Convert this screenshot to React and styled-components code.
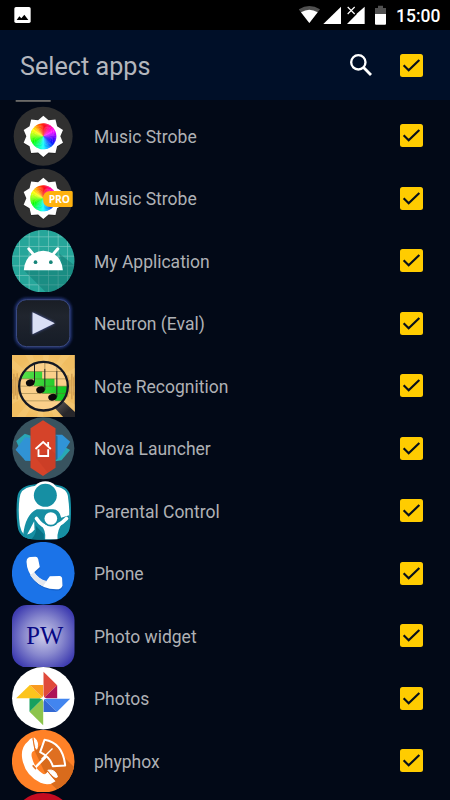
import React, { useState } from 'react'
import styled, { createGlobalStyle } from 'styled-components'

const polar = (cx, cy, r, deg) => {
    const a = (deg - 90) * Math.PI / 180
    return `${(cx + r * Math.cos(a)).toFixed(2)} ${(cy + r * Math.sin(a)).toFixed(2)}`
}

function HeadIcon() {
    return (
        <AppIcon viewBox="0 0 187.5 187.5">
            <rect x="11" y="150" width="105" height="29.5" fill="#6b6a68" />
        </AppIcon>
    )
}

function StrobeIcon({ pro }) {
    const star = Array.from({ length: 20 }, (_, i) => polar(94, 94, i % 2 ? 51 : 62, i * 18)).join(' L')
    return (
        <AppIcon viewBox="0 0 187.5 187.5">
            <circle cx="93.5" cy="93.5" r="88.5" fill="#303030" />
            <path d={`M${star}Z`} fill="#111" opacity="0.35" transform="translate(0 3)" />
            <path d={`M${star}Z`} fill="#fff" />
            {/* hue wheel, runs backwards from red at the top */}
            {Array.from({ length: 72 }, (_, i) => (
                <path
                    key={i}
                    d={`M94 94 L${polar(94, 94, 39, i * 5 - 1)} A39 39 0 0 1 ${polar(94, 94, 39, i * 5 + 5)}Z`}
                    fill={`hsl(${(360 - i * 5) % 360} 100% 50%)`}
                />
            ))}
            {pro && (
                <>
                    <path d="M116 72 H178 Q182 72 182 76 V116 Q182 120 178 120 H116 Q93 120 93 96 Q93 72 116 72Z" fill="#ffb20e" />
                    <text x="110" y="108" fontSize="31" fontWeight="700" fontFamily="'Open Sans', sans-serif" fill="#fff" textLength="64">PRO</text>
                </>
            )}
        </AppIcon>
    )
}

function AndroidIcon() {
    return (
        <AppIcon viewBox="37.5 13.5 187.5 187.5">
            <clipPath id="android"><circle cx="131.2" cy="107.2" r="94" /></clipPath>
            <g clipPath="url(#android)">
                <rect x="37" y="13" width="189" height="189" fill="#26a69a" />
                <path d="M60 13V202M89 13V202M118 13V202M147 13V202M176 13V202M204 13V202M37 34H226M37 63H226M37 92H226M37 121H226M37 150H226M37 178H226" stroke="#7cc9c0" strokeWidth="2" />
                <path d="M73 134 L145 206 H226 V120 L180 85 L190 134Z" fill="#0d6f68" opacity="0.45" />
            </g>
            <path d="M73 134 Q75 98 102 84 Q131 68 161 84 Q187 98 190 134Z" fill="#fff" />
            <path d="M101 86 L88 70M161 86 L175 70" stroke="#fff" strokeWidth="9" strokeLinecap="round" />
            <circle cx="108" cy="110" r="5.5" fill="#168579" />
            <circle cx="154" cy="110" r="5.5" fill="#168579" />
        </AppIcon>
    )
}

function NeutronIcon() {
    return (
        <AppIcon viewBox="37.5 201 187.5 187.5">
            <defs>
                <linearGradient id="neutron" x2="0" y2="1">
                    <stop offset="0" stopColor="#191d25" />
                    <stop offset="0.35" stopColor="#20252e" />
                    <stop offset="1" stopColor="#161c27" />
                </linearGradient>
                <filter id="glow" x="-20%" y="-20%" width="140%" height="140%"><feGaussianBlur stdDeviation="4" /></filter>
            </defs>
            <rect x="50" y="223" width="162" height="143" rx="32" fill="none" stroke="#3048a6" strokeWidth="6" filter="url(#glow)" />
            <rect x="51" y="224" width="160" height="141" rx="30" fill="url(#neutron)" stroke="#3c4b82" strokeWidth="3" />
            <path d="M99 262 L166 295 L99 328Z" fill="#5260a8" filter="url(#glow)" />
            <path d="M99 262 L166 295 L99 328Z" fill="#dadff5" />
        </AppIcon>
    )
}

function NoteIcon() {
    return (
        <AppIcon viewBox="37.5 13.5 187.5 187.5">
            <defs>
                <radialGradient id="sand">
                    <stop offset="0" stopColor="#ffda8c" />
                    <stop offset="1" stopColor="#f0bd61" />
                </radialGradient>
                <linearGradient id="green" x2="1" y2="0">
                    <stop offset="0" stopColor="#5de04b" />
                    <stop offset="1" stopColor="#0cc41f" />
                </linearGradient>
                <linearGradient id="handle" x2="1" y2="1">
                    <stop offset="0" stopColor="#6a6460" />
                    <stop offset="0.6" stopColor="#27262a" />
                </linearGradient>
                <clipPath id="lens"><circle cx="132" cy="107" r="72" /></clipPath>
            </defs>
            <rect x="37" y="13" width="189" height="189" fill="url(#sand)" />
            {Array.from({ length: 12 }, (_, i) => (
                <path key={i} d={`M131 107 L${polar(131, 107, 150, i * 30)} L${polar(131, 107, 150, i * 30 + 11)}Z`} fill="#ffe0a0" opacity="0.2" />
            ))}
            <path d="M38 86V129M43 70V146M48 79V135M53 68V147M58 82V131M205 74V140M211 88V130M217 70V146M223 80V135" stroke="#c9964c" strokeWidth="4" opacity="0.8" />
            <path d="M164 170 L187 148 L232 190 V206 H197Z" fill="url(#handle)" />
            <g clipPath="url(#lens)">
                <rect x="58" y="34" width="148" height="148" fill="#fbd08a" />
                <path d="M60 63H128V85H165V107H206V151H167V129H128V107H103V85H60Z" fill="url(#green)" />
                <path d="M56 63H206M56 85H206M56 107H206M56 129H206M56 151H206" stroke="#70602d" strokeWidth="2" opacity="0.65" />
                <path d="M105 34V96M136 55V118M172 62V139" stroke="#211f22" strokeWidth="3" />
                <path d="M136 34V55M172 34V62" stroke="#8d7546" strokeWidth="2" />
            </g>
            <g fill="#0b090b">
                <ellipse cx="92" cy="97" rx="13" ry="10" transform="rotate(-15 92 97)" />
                <ellipse cx="123" cy="118" rx="13" ry="10" transform="rotate(-15 123 118)" />
                <ellipse cx="159" cy="140" rx="13" ry="10" transform="rotate(-15 159 140)" />
            </g>
            <circle cx="132" cy="107" r="73" fill="none" stroke="#141823" strokeWidth="7" />
        </AppIcon>
    )
}

function NovaIcon() {
    return (
        <AppIcon viewBox="37.5 201 187.5 187.5">
            <circle cx="131.5" cy="295" r="93" fill="#38535f" />
            <path d="M50 273 L76 251 L94 257 V332 L76 331Z" fill="#2aa6b5" />
            <path d="M48 299 L77 262 L94 264 V332 H78Z" fill="#3093d5" />
            <path d="M167 275 L212 300 L186 331 L167 334Z" fill="#28a9b4" />
            <path d="M167 254 H188 L212 275 L186 316 L167 332Z" fill="#3094d7" />
            <path d="M167 254 L174 259 V326 L167 332Z" fill="#20516a" opacity="0.6" />
            <path d="M130.5 211 L168 235 V353 L130.5 378 L93 353 V235Z" fill="#d54329" />
            <path d="M155 299 L168 312 V353 L145 368 L108 322Z" fill="#a82e20" opacity="0.2" />
            <path d="M108 297 L131 276 L154 297M146 288V276M117 298V318H146V298" fill="none" stroke="#fff" strokeWidth="5.5" />
        </AppIcon>
    )
}

function ParentalIcon() {
    return (
        <AppIcon viewBox="37.5 13.5 187.5 187.5">
            <clipPath id="parental"><path d="M98 28 Q131 20 170 28 Q211 34 213 68 Q217 113 212 151 Q207 188 167 191 Q132 195 96 191 Q58 188 54 151 Q48 108 53 68 Q56 33 98 28Z" /></clipPath>
            <g clipPath="url(#parental)">
                <rect x="37" y="13" width="189" height="189" fill="#168fa3" />
                <path d="M96 33 Q131 24 166 32 Q206 38 206 69 Q212 108 207 149 Q200 181 165 184 L96 187 Q68 185 61 150 Q55 108 60 69 Q62 39 96 33Z" fill="#fff" />
                <path d="M71 178 Q78 116 112 101 H159 Q180 100 185 127 L209 119 V192 H71Z" fill="#168fa3" />
                <path d="M104 137 L105 162 Q97 174 83 177Z" fill="#fff" />
                <path d="M96 191 Q113 175 109 151 L133 176 V192Z" fill="#087184" />
            </g>
            <circle cx="137.5" cy="59.5" r="42" fill="#fff" />
            <circle cx="137.5" cy="59.5" r="34.5" fill="#168fa3" />
            <path d="M111 129 Q128 155 149 155 Q179 153 201 129" fill="none" stroke="#fff" strokeWidth="11" strokeLinecap="round" />
            <path d="M121 143 Q138 151 155 153 Q173 151 190 141 Q172 163 174 191 H137 Q140 163 121 143Z" fill="#fff" />
            <circle cx="154" cy="129" r="24" fill="#168fa3" />
            <circle cx="154" cy="129" r="19" fill="#fff" />
        </AppIcon>
    )
}

function PhoneIcon() {
    return (
        <AppIcon viewBox="37.5 201 187.5 187.5">
            <circle cx="131.2" cy="294.7" r="94" fill="#1b73e8" />
            <g transform="translate(1 4)" opacity="0.25">
                <path d="M81 260 Q82 246 94 246 L108 245 Q114 245 116 252 L121 276 L104 292 Q117 312 139 320 L151 304 L180 303 Q188 304 188 312 L189 332 Q186 343 170 343 Q130 343 104 315 Q82 290 81 260Z" fill="#06397f" />
            </g>
            <path d="M81 260 Q82 246 94 246 L108 245 Q114 245 116 252 L121 276 L104 292 Q117 312 139 320 L151 304 L180 303 Q188 304 188 312 L189 332 Q186 343 170 343 Q130 343 104 315 Q82 290 81 260Z" fill="#fff" />
            <path d="M104 292 Q117 312 141 318 L131 334 Q106 322 92 300Z" fill="#e5e8ee" />
        </AppIcon>
    )
}

function WidgetIcon() {
    return (
        <AppIcon viewBox="37.5 13.5 187.5 187.5">
            <radialGradient id="widget" r="0.68">
                <stop offset="0" stopColor="#ceceeb" />
                <stop offset="0.45" stopColor="#8989ce" />
                <stop offset="0.85" stopColor="#403eb1" />
                <stop offset="1" stopColor="#3630aa" />
            </radialGradient>
            <rect x="37.5" y="13.5" width="187.5" height="187.5" rx="45" fill="url(#widget)" />
            <text x="80" y="129" fontSize="77" fontFamily="'Liberation Serif', serif" fill="#080884" textLength="111" lengthAdjust="spacingAndGlyphs">PW</text>
        </AppIcon>
    )
}

function PhotosIcon() {
    return (
        <AppIcon viewBox="37.5 201 187.5 187.5">
            <circle cx="131.2" cy="294.7" r="93.5" fill="#fff" />
            <path d="M132 215 L173 256 L132 295Z" fill="#e04a3b" />
            <path d="M173 256 V295 H132Z" fill="#ad1459" />
            <path d="M132 296 H212 L172 336Z" fill="#4285ef" />
            <path d="M132 296 L172 336 H132Z" fill="#3268d3" />
            <path d="M131 295 V376 L90 335Z" fill="#8cc44c" />
            <path d="M90 295 H131 L90 335Z" fill="#16a05e" />
            <path d="M50 295 L91 255 L131 295Z" fill="#fcc41d" />
            <path d="M91 255 H131 V295Z" fill="#f99b20" />
            <path d="M131.5 284 L134 292 L142 295.5 L134 298 L131.5 306 L129 298 L121 295.5 L129 292Z" fill="#fff" />
        </AppIcon>
    )
}

function PhyphoxIcon() {
    return (
        <AppIcon viewBox="37.5 28.5 187.5 187.5">
            <clipPath id="phyphox"><circle cx="131.2" cy="122.2" r="94" /></clipPath>
            <g clipPath="url(#phyphox)">
                <rect x="37" y="28" width="189" height="189" fill="#ff8127" />
                <path d="M142 58 L228 144 V217 H184 L150 186 L105 90Z" fill="#d96b1c" />
            </g>
            <path d="M99 52 Q91 54 86 62 Q63 80 68 114 Q76 164 123 187 Q149 197 168 182 L144 154 Q137 166 128 158 Q106 145 97 110 Q93 94 105 91Z" fill="#fff" />
            <path d="M104 52 Q119 64 112 86 Q106 86 104 52Z" fill="#fff" stroke="#fff" strokeWidth="3" />
            <path d="M145 149 Q168 145 174 169 Q168 178 145 149Z" fill="#fff" stroke="#fff" strokeWidth="3" />
            <path d="M100 54 L107 90M144 152 L168 180" stroke="#df6f20" strokeWidth="2.5" />
            <path d="M135 58 Q190 67 197 135 L160 137 Q152 110 122 95Z" fill="#df6f20" stroke="#fff" strokeWidth="6" strokeLinejoin="round" />
            <path d="M126 116 L159 84" stroke="#fff" strokeWidth="4" />
            <path d="M106 142 L138 110" stroke="#fff" strokeWidth="7" strokeLinecap="round" />
            <path d="M101 136 L108 144" stroke="#df6f20" strokeWidth="5" strokeLinecap="round" />
        </AppIcon>
    )
}

function RedIcon() {
    return (
        <AppIcon viewBox="37.5 216 187.5 187.5">
            <circle cx="131" cy="311" r="92" fill="#c40b20" />
        </AppIcon>
    )
}

const apps = [
    { id: 0, name: '', icon: <HeadIcon /> },
    { id: 1, name: 'Music Strobe', icon: <StrobeIcon /> },
    { id: 2, name: 'Music Strobe', icon: <StrobeIcon pro /> },
    { id: 3, name: 'My Application', icon: <AndroidIcon /> },
    { id: 4, name: 'Neutron (Eval)', icon: <NeutronIcon /> },
    { id: 5, name: 'Note Recognition', icon: <NoteIcon /> },
    { id: 6, name: 'Nova Launcher', icon: <NovaIcon /> },
    { id: 7, name: 'Parental Control', icon: <ParentalIcon /> },
    { id: 8, name: 'Phone', icon: <PhoneIcon /> },
    { id: 9, name: 'Photo widget', icon: <WidgetIcon /> },
    { id: 10, name: 'Photos', icon: <PhotosIcon /> },
    { id: 11, name: 'phyphox', icon: <PhyphoxIcon /> },
    { id: 12, name: '', icon: <RedIcon /> },
]

function Check({ checked, onClick }) {
    return (
        <CheckButton role="checkbox" aria-checked={checked} aria-label="Select" $checked={checked} onClick={onClick}>
            {checked && (
                <svg width="23" height="23" viewBox="0 0 69 69">
                    <path d="M11 34 L26 49 L58 18" fill="none" stroke="#07101b" strokeWidth="6.5" />
                </svg>
            )}
        </CheckButton>
    )
}

function App() {
    const [unchecked, setUnchecked] = useState([])

    const toggle = (id) => {
        setUnchecked(unchecked.includes(id) ? unchecked.filter((i) => i !== id) : [...unchecked, id])
    }

    const toggleAll = () => {
        setUnchecked(unchecked.length ? [] : apps.map((app) => app.id))
    }

    return (
        <Screen>
            <GlobalStyle />
            <StatusBar>
                <svg width="17" height="16" viewBox="0 0 51 48">
                    <rect x="1" y="0" width="49" height="48" rx="5" fill="#fff" />
                    <path d="M8 39 L16 28 L22 34 L31 23 L43 39Z" fill="#000" />
                </svg>
                <StatusIcons>
                    <svg width="88" height="20" viewBox="222 15 264 60">
                        <path d="M221 28 Q253 8 285 28 L253 69Z" fill="#505050" />
                        <path d="M228 37 Q253 22 278 37 L253 69Z" fill="#fff" />
                        <path d="M295 72 L348 20 V72Z" fill="#fff" />
                        <path d="M366 72 L395 43 V41 L419 20 V72Z" fill="#fff" />
                        <path d="M368 21 L389 42M389 21 L368 42" stroke="#fff" strokeWidth="3.5" />
                        <path d="M450 24H459V17H474V24H483V42H450Z" fill="#505050" />
                        <path d="M450 42H483V71Q483 74 480 74H453Q450 74 450 71Z" fill="#fff" />
                    </svg>
                    <Time>15:00</Time>
                </StatusIcons>
            </StatusBar>
            <Header>
                <Title>Select apps</Title>
                <SearchButton aria-label="Search">
                    <svg width="24" height="24" viewBox="0 0 72 72">
                        <circle cx="28" cy="28" r="21.5" fill="none" stroke="#fff" strokeWidth="7" />
                        <path d="M43 43 L66 66" stroke="#fff" strokeWidth="8.5" />
                    </svg>
                </SearchButton>
                <Check checked={!unchecked.length} onClick={toggleAll} />
            </Header>
            <ListWindow>
                <List>
                    {apps.map((app) => (
                        <Row key={app.id}>
                            {app.icon}
                            <Label>{app.name}</Label>
                            {app.name && <Check checked={!unchecked.includes(app.id)} onClick={() => toggle(app.id)} />}
                        </Row>
                    ))}
                </List>
            </ListWindow>
        </Screen>
    )
}

export default App

const GlobalStyle = createGlobalStyle`
  * {
    box-sizing: border-box;
  }

  body {
    margin: 0;
    background: #020917;
  }
`

const Screen = styled.div`
  display: flex;
  flex-direction: column;
  width: 450px;
  height: 800px;
  overflow: hidden;
  background: #020917;
  font-family: Roboto, sans-serif;
`

const StatusBar = styled.div`
  display: flex;
  justify-content: space-between;
  align-items: center;
  flex-shrink: 0;
  height: 30px;
  padding: 0 10px 0 14px;
  background: #000;
`

const StatusIcons = styled.div`
  display: flex;
  align-items: center;
  gap: 8px;
`

const Time = styled.span`
  width: 45px;
  padding: 1px 0 0 1px;
  font-size: 17.5px;
  font-weight: 500;
  line-height: 20px;
  color: #fff;
`

const Header = styled.header`
  display: flex;
  align-items: center;
  flex-shrink: 0;
  height: 70px;
  padding: 0 27px 0 20px;
  background: #000f28;
`

const Title = styled.h1`
  flex: 1;
  margin: 0;
  padding-top: 2px;
  font-size: 25.2px;
  font-weight: 400;
  color: #b3b6bd;
`

const SearchButton = styled.button`
  display: flex;
  margin-right: 27px;
  padding: 0;
  border: 0;
  background: none;
  cursor: pointer;
`

const ListWindow = styled.div`
  flex: 1;
  min-height: 0;
  overflow: hidden;
`

const List = styled.div`
  display: flex;
  flex-direction: column;
  margin-top: -58px;
`

const Row = styled.div`
  display: flex;
  align-items: center;
  flex-shrink: 0;
  height: 62.5px;
  padding: 0 27px 0 12.3px;
`

const AppIcon = styled.svg`
  flex-shrink: 0;
  width: 62.5px;
  height: 62.5px;
`

const Label = styled.span`
  flex: 1;
  padding: 2px 0 0 19.2px;
  font-size: 17.5px;
  line-height: 22px;
  color: #afb1b5;
`

const CheckButton = styled.button`
  display: flex;
  width: 23px;
  height: 23px;
  padding: 0;
  border: ${({ $checked }) => ($checked ? '0' : '2px solid #9a9da3')};
  border-radius: 2.5px;
  background: ${({ $checked }) => ($checked ? '#ffcc00' : 'transparent')};
  cursor: pointer;
`
